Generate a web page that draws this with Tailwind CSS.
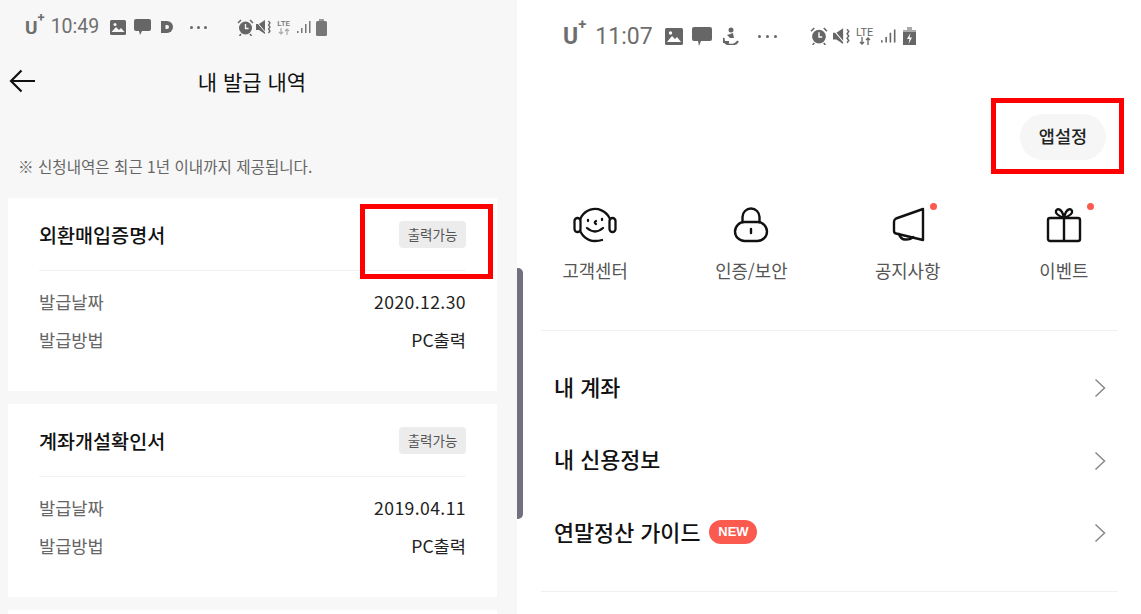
<!DOCTYPE html>
<html lang="ko">
<head>
  <meta charset="UTF-8" />
  <title>내 발급 내역</title>
  <script src="https://cdn.jsdelivr.net/npm/@tailwindcss/browser@4"></script>
</head>
<body class="bg-white font-['Noto_Sans_CJK_KR','Noto_Sans',sans-serif]">
  <div class="relative flex w-[1141px] h-[614px] overflow-hidden">

    <!-- left phone -->
    <section class="w-[517px] h-full bg-[#f7f7f7] shrink-0 overflow-hidden">
      <div class="h-[54px] pl-[25px] flex items-center text-[#6e6e6e]">
        <span class="font-['Roboto'] font-bold text-[19px] leading-none">U<sup class="text-[13px] font-bold align-[6px] leading-none">+</sup></span>
        <span class="ml-[6px] font-['Roboto'] text-[19.500px] leading-none">10:49</span>
        <svg class="ml-[11px]" width="16" height="15" viewBox="0 0 16 15"><rect width="16" height="15" rx="1.500" fill="#666"/><path d="M1.500 12 6 7l3 3 2-2 3.500 4z" fill="#f7f7f7"/><circle cx="5" cy="4.500" r="1.500" fill="#f7f7f7"/></svg>
        <svg class="ml-[8px]" width="17" height="17" viewBox="0 0 17 17"><path d="M2 0h13a2 2 0 0 1 2 2v8a2 2 0 0 1-2 2H8l-2 4-1-4H2a2 2 0 0 1-2-2V2a2 2 0 0 1 2-2z" fill="#666"/></svg>
        <svg class="ml-[10px]" width="14" height="14" viewBox="0 0 14 14"><path d="M0 1h6a6 6 0 0 1 0 12H0z" fill="#666"/><path d="M4.500 5h1.500a2 2 0 0 1 0 4H4.500z" fill="#f7f7f7"/></svg>
        <span class="ml-[15px] flex gap-[4px]"><i class="w-[3px] h-[3px] rounded-full bg-[#666]"></i><i class="w-[3px] h-[3px] rounded-full bg-[#666]"></i><i class="w-[3px] h-[3px] rounded-full bg-[#666]"></i></span>
        <svg class="ml-[30px]" width="17" height="17" viewBox="0 0 17 17"><circle cx="8.500" cy="9" r="6.500" fill="#666"/><path d="M8.500 5v4.500h3" stroke="#f7f7f7" stroke-width="1.300" fill="none"/><path d="M1 4l3-3M16 4l-3-3M4 15l-1.500 2M13 15l1.500 2" stroke="#666" stroke-width="1.500"/></svg>
        <svg class="ml-[2px]" width="16" height="16" viewBox="0 0 16 16"><path d="M0 5h3l6-4v14l-6-4H0z" fill="#666"/><path d="M0 2l10 12" stroke="#f7f7f7" stroke-width="1"/><path d="M12.500 2l1.500 2-1.500 2 1.500 2-1.500 2 1.500 2-1.500 2" stroke="#666" stroke-width="1.300" fill="none"/></svg>
        <span class="ml-[4px] w-[15px] flex flex-col items-center text-[#777] font-['Roboto'] font-medium text-[8px] leading-[8px]">LTE<svg width="12" height="7" viewBox="0 0 12 7"><path d="M3 0v6M1 4l2 2 2-2M9 7V1M7 3l2-2 2 2" stroke="#aaa" stroke-width="1.200" fill="none"/></svg></span>
        <svg class="ml-[5px]" width="15" height="14" viewBox="0 0 15 14"><path d="M1 11h1.500v2H1zM5 8h1.500v5H5zM9 4h1.500v9H9zM13 1h1.500v12H13z" fill="#777"/></svg>
        <svg class="ml-[5px]" width="11" height="17" viewBox="0 0 11 17"><path d="M3 0h5v2H3z" fill="#999"/><rect y="2" width="11" height="15" rx="1.500" fill="#777"/></svg>
      </div>

      <header class="relative h-[56px] flex items-center justify-center pr-[13px]">
        <svg class="absolute left-[9px] top-[15px]" width="27" height="24" viewBox="0 0 27 24"><path d="M26 12H2M12.500 1.500 2 12l10.500 10.500" stroke="#111" stroke-width="2.200" fill="none"/></svg>
        <h1 class="text-[21px] leading-none text-[#111] mt-[-2px]">내 발급 내역</h1>
      </header>

      <p class="mt-[45px] pl-[18px] h-[22px] text-[15.600px] leading-[22px] text-[#666]">※ 신청내역은 최근 1년 이내까지 제공됩니다.</p>

      <div class="mt-[21px] mx-[8px] w-[489px] flex flex-col gap-[13px]">
        <article class="h-[193px] bg-white px-[31px]">
          <div class="h-[73px] flex items-center justify-between border-b border-[#f3f3f3]">
            <h2 class="mt-[2px] text-[19.600px] font-medium text-[#111]">외환매입증명서</h2>
            <span class="w-[67px] h-[27px] rounded-[4px] bg-[#ececec] text-[13.500px] text-[#555] flex items-center justify-center">출력가능</span>
          </div>
          <dl class="pt-[19px] flex flex-col gap-[15px] text-[17.600px] leading-[23px]">
            <div class="flex justify-between"><dt class="text-[#666]">발급날짜</dt><dd class="text-[#222] tracking-[0.400px]">2020.12.30</dd></div>
            <div class="flex justify-between"><dt class="text-[#666]">발급방법</dt><dd class="text-[#222]">PC출력</dd></div>
          </dl>
        </article>
        <article class="h-[193px] bg-white px-[31px]">
          <div class="h-[73px] flex items-center justify-between border-b border-[#f3f3f3]">
            <h2 class="mt-[2px] text-[19.600px] font-medium text-[#111]">계좌개설확인서</h2>
            <span class="w-[67px] h-[27px] rounded-[4px] bg-[#ececec] text-[13.500px] text-[#555] flex items-center justify-center">출력가능</span>
          </div>
          <dl class="pt-[19px] flex flex-col gap-[15px] text-[17.600px] leading-[23px]">
            <div class="flex justify-between"><dt class="text-[#666]">발급날짜</dt><dd class="text-[#222] tracking-[0.400px]">2019.04.11</dd></div>
            <div class="flex justify-between"><dt class="text-[#666]">발급방법</dt><dd class="text-[#222]">PC출력</dd></div>
          </dl>
        </article>
        <article class="h-[193px] bg-white"></article>
      </div>
    </section>

    <!-- right phone -->
    <section class="relative flex-1 bg-white">
      <div class="absolute left-0 top-[268px] w-[6px] h-[251px] rounded-r-[5px] bg-[#70707f]"></div>

      <div class="h-[72px] pl-[46px] flex items-center text-[#6e6e6e]">
        <span class="font-['Roboto'] font-bold text-[23px] leading-none">U<sup class="text-[15px] font-bold align-[7px] leading-none">+</sup></span>
        <span class="ml-[9px] font-['Roboto'] text-[23px] leading-none">11:07</span>
        <svg class="ml-[12px]" width="18" height="17" viewBox="0 0 18 17"><rect width="18" height="17" rx="1.500" fill="#666"/><path d="M2 14l5-6 3 3 2-2 4 5z" fill="#fff"/><circle cx="5.500" cy="5" r="1.700" fill="#fff"/></svg>
        <svg class="ml-[9px]" width="20" height="19" viewBox="0 0 20 19"><path d="M2 0h16a2 2 0 0 1 2 2v10a2 2 0 0 1-2 2H9l-2 5-1-5H2a2 2 0 0 1-2-2V2a2 2 0 0 1 2-2z" fill="#666"/></svg>
        <svg class="ml-[11px]" width="16" height="18" viewBox="0 0 16 18"><circle cx="8" cy="3" r="2.500" fill="#666"/><path d="M4 8l6-2 1 5H7z" fill="#666"/><path d="M1 11a7 5 0 0 0 14 3M0 15h6" stroke="#666" stroke-width="2" fill="none"/></svg>
        <span class="ml-[19px] flex gap-[5px]"><i class="w-[3px] h-[3px] rounded-full bg-[#666]"></i><i class="w-[3px] h-[3px] rounded-full bg-[#666]"></i><i class="w-[3px] h-[3px] rounded-full bg-[#666]"></i></span>
        <svg class="ml-[33px]" width="18" height="18" viewBox="0 0 17 17"><circle cx="8.500" cy="9" r="6.500" fill="#666"/><path d="M8.500 5v4.500h3" stroke="#fff" stroke-width="1.300" fill="none"/><path d="M1 4l3-3M16 4l-3-3M4 15l-1.500 2M13 15l1.500 2" stroke="#666" stroke-width="1.500"/></svg>
        <svg class="ml-[5px]" width="18" height="18" viewBox="0 0 16 16"><path d="M0 5h3l6-4v14l-6-4H0z" fill="#666"/><path d="M0 2l10 12" stroke="#fff" stroke-width="1"/><path d="M12.500 2l1.500 2-1.500 2 1.500 2-1.500 2 1.500 2-1.500 2" stroke="#666" stroke-width="1.300" fill="none"/></svg>
        <span class="ml-[5px] w-[18px] flex flex-col items-center text-[#666] font-['Roboto'] text-[11px] leading-[9px]">LTE<svg width="14" height="8" viewBox="0 0 14 8"><path d="M4 0v7M2 5l2 2 2-2M10 8V1M8 3l2-2 2 2" stroke="#666" stroke-width="1.300" fill="none"/></svg></span>
        <svg class="ml-[6px]" width="16" height="16" viewBox="0 0 15 14"><path d="M1 11h1.500v2H1zM5 8h1.500v5H5zM9 4h1.500v9H9zM13 1h1.500v12H13z" fill="#666"/></svg>
        <svg class="ml-[7px]" width="13" height="18" viewBox="0 0 13 18"><path d="M4 0h5v3H4z" fill="#aaa"/><path d="M0 3h13v2H0z" fill="#aaa"/><rect y="5" width="13" height="13" fill="#666"/><path d="M7.500 6 4 12h2.500L5.500 17 9 10.500H6.500z" fill="#fff"/></svg>
      </div>

      <div class="mt-[42px] h-[46px] pr-[35px] flex justify-end">
        <button class="w-[86px] h-[46px] mr-[1px] pb-[2px] rounded-full bg-[#f6f6f6] text-[17.500px] font-medium text-[#222]">앱설정</button>
      </div>

      <nav class="mt-[47px] h-[76px] grid grid-cols-4 text-[17.800px] text-[#555]">
        <a class="flex flex-col items-center justify-between">
          <svg width="44" height="36" viewBox="0 0 44 36" fill="none" stroke="#111" stroke-width="2.300" stroke-linecap="round"><path d="M36.500 11A16 16 0 1 0 22 34q4 0 7-1"/><rect x="1.500" y="11" width="6" height="14" rx="3" fill="#fff"/><rect x="36.500" y="11" width="6" height="14" rx="3" fill="#fff"/><path d="M14 21q8 7 16 0M15 13v1M29 12v1M23 14q-2.500 1.500 0 3"/></svg>
          <span class="leading-[24px] mb-[1px]">고객센터</span>
        </a>
        <a class="flex flex-col items-center justify-between">
          <svg width="36" height="36" viewBox="0 0 36 36" fill="none" stroke="#111" stroke-width="2.400" stroke-linecap="round"><path d="M9.500 15V10a8.500 8.500 0 0 1 17 0v5"/><rect x="2" y="15" width="32" height="19" rx="9.500"/><path d="M18 22v4"/></svg>
          <span class="leading-[24px] mb-[1px]">인증/보안</span>
        </a>
        <a class="relative flex flex-col items-center justify-between">
          <svg width="34" height="36" viewBox="0 0 34 36" fill="none" stroke="#111" stroke-width="2.400" stroke-linejoin="round" stroke-linecap="round"><path d="M32 2 5 11.500Q3 12.500 3 15v9q0 2 2 2.500L32 33z"/><path d="M8 27q2 6 7 5.500 5 0 7-2.500"/></svg>
          <span class="leading-[24px] mb-[1px]">공지사항</span>
          <i class="absolute left-[100px] top-[-4px] w-[7px] h-[7px] rounded-full bg-[#fb5a4f]"></i>
        </a>
        <a class="relative flex flex-col items-center justify-between">
          <svg width="36" height="36" viewBox="0 0 36 36" fill="none" stroke="#111" stroke-width="2.400" stroke-linejoin="round"><rect x="2" y="11" width="32" height="23" rx="2"/><path d="M18 11v23"/><path d="M18 11C13 9 9 7 10 4s6-3 8 7c2-10 7-10 8-7s-3 5-8 7z"/></svg>
          <span class="leading-[24px] mb-[1px]">이벤트</span>
          <i class="absolute left-[101px] top-[-4px] w-[7px] h-[7px] rounded-full bg-[#fb5a4f]"></i>
        </a>
      </nav>

      <div class="mx-[24px] mt-[47px] w-[577px] border-t border-[#f0f0f0]">
        <ul class="h-[260px] pt-[21px] pb-[22px] pr-[12px] pl-[13px] flex flex-col justify-between text-[21.800px] font-medium text-[#111]">
          <li class="h-[72px] flex items-center justify-between"><span class="mb-[2px]">내 계좌</span><svg width="12" height="20" viewBox="0 0 12 20"><path d="m1.500 1.500 9 8.500-9 8.500" stroke="#888" stroke-width="1.500" fill="none"/></svg></li>
          <li class="h-[72px] flex items-center justify-between"><span class="mb-[2px]">내 신용정보</span><svg width="12" height="20" viewBox="0 0 12 20"><path d="m1.500 1.500 9 8.500-9 8.500" stroke="#888" stroke-width="1.500" fill="none"/></svg></li>
          <li class="h-[72px] flex items-center justify-between"><span class="mb-[2px] flex items-center gap-[9px]">연말정산 가이드<b class="w-[48px] h-[24px] rounded-full bg-[#fb5a4f] text-white text-[13px] font-bold font-['Liberation_Sans'] flex items-center justify-center">NEW</b></span><svg width="12" height="20" viewBox="0 0 12 20"><path d="m1.500 1.500 9 8.500-9 8.500" stroke="#888" stroke-width="1.500" fill="none"/></svg></li>
        </ul>
        <div class="border-t border-[#f0f0f0]"></div>
      </div>
    </section>

    <!-- red callouts over the screenshot -->
    <div class="absolute left-[360px] top-[204px] w-[133px] h-[75px] border-[5px] border-[#ff0000]"></div>
    <div class="absolute left-[991px] top-[98px] w-[133px] h-[76px] border-[5px] border-[#ff0000]"></div>
  </div>
</body>
</html>
